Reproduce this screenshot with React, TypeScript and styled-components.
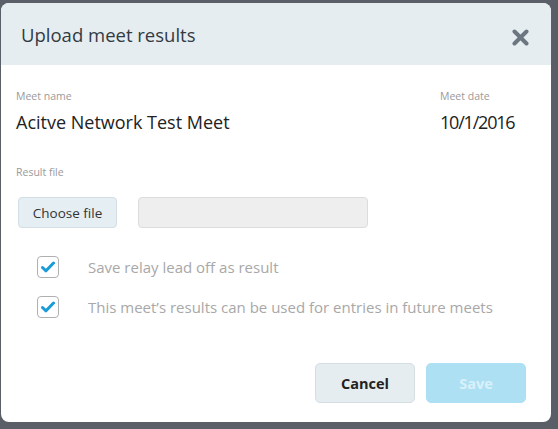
import styled, { createGlobalStyle } from "styled-components";

const GlobalStyle = createGlobalStyle`
  html, body {
    margin: 0;
    padding: 0;
    background: #5a5e66;
    font-family: "Open Sans", "Lato", sans-serif;
  }
`

const Page = styled.div`
  width: 558px;
  height: 429px;
  padding: 3px 7px 0 1px;
  box-sizing: border-box;
  overflow: hidden;
`

const Modal = styled.div`
  width: 550px;
  height: 419px;
  background: #fff;
  border-radius: 8px;
  overflow: hidden;
  display: flex;
  flex-direction: column;
`

const Header = styled.div`
  height: 62px;
  background: #e6edf0;
  display: flex;
  align-items: center;
  justify-content: space-between;
  padding: 0 22px 0 20px;
`

const Title = styled.h2`
  margin: 0;
  font-size: 18.5px;
  font-weight: 400;
  color: #333a44;
`

const Close = styled.button`
  border: none;
  background: none;
  padding: 0;
  margin-top: 6px;
  display: flex;
  cursor: pointer;
`

const Body = styled.div`
  flex: 1;
  display: flex;
  flex-direction: column;
  padding: 24px 15px 0 15px;
`

const InfoRow = styled.div`
  display: flex;
  justify-content: space-between;
`

const Field = styled.div<{ $width?: number }>`
  display: flex;
  flex-direction: column;
  width: ${p => (p.$width ? `${p.$width}px` : "auto")};
`

const Label = styled.div`
  font-size: 10.5px;
  color: #9a9a9a;
  line-height: 14px;
`

const Value = styled.div<{ $tight?: boolean }>`
  font-size: 18px;
  color: #222;
  margin-top: 8px;
  line-height: 22px;
  letter-spacing: ${p => (p.$tight ? "-1.2px" : "0")};
`

const FileSection = styled.div`
  margin-top: 32px;
`

const FileRow = styled.div`
  display: flex;
  gap: 21px;
  margin-top: 18px;
  padding-left: 2px;
`

const ChooseButton = styled.button`
  width: 99px;
  height: 31px;
  background: #e5eef2;
  border: 1px solid #d3dfe5;
  border-radius: 4px;
  font-family: inherit;
  font-size: 13.5px;
  color: #333;
  padding: 0;
`

const FileInput = styled.div`
  width: 230px;
  height: 31px;
  box-sizing: border-box;
  background: #eeeeee;
  border: 1px solid #dcdcdc;
  border-radius: 4px;
`

const Checks = styled.div`
  display: flex;
  flex-direction: column;
  gap: 18px;
  margin-top: 28px;
  padding-left: 21px;
`

const CheckRow = styled.label`
  display: flex;
  align-items: center;
  gap: 29px;
  height: 22px;
`

const Box = styled.span`
  width: 22px;
  height: 22px;
  box-sizing: border-box;
  border: 1px solid #b0b0b0;
  border-radius: 4px;
  display: flex;
  align-items: center;
  justify-content: center;
  background: #fff;
`

const CheckText = styled.span`
  font-size: 15px;
  color: #a8a8a8;
`

const Footer = styled.div`
  display: flex;
  justify-content: flex-end;
  gap: 11px;
  padding: 0 25px 19px 0;
  margin-top: auto;
`

const ActionButton = styled.button<{ $primary?: boolean }>`
  width: 100px;
  height: 40px;
  border-radius: 5px;
  font-family: inherit;
  font-size: 14.5px;
  font-weight: 700;
  padding: 0;
  border: 1px solid ${p => (p.$primary ? "#aee0f3" : "#d4dee3")};
  background: ${p => (p.$primary ? "#aee0f3" : "#e6edf0")};
  color: ${p => (p.$primary ? "#d9f1fa" : "#222")};
`

const CheckIcon = () => (
  <svg width="14" height="12" viewBox="0 0 14 12">
    <path d="M1.5 6.5 L5 9.8 L12.5 2" fill="none" stroke="#1b9ad8" strokeWidth="3" strokeLinecap="round" strokeLinejoin="round" />
  </svg>
)

const CloseIcon = () => (
  <svg width="17" height="17" viewBox="0 0 17 17">
    <path d="M2.5 2.5 L14.5 14.5 M14.5 2.5 L2.5 14.5" stroke="#6b7680" strokeWidth="4" strokeLinecap="round" />
  </svg>
)

const checks = [
  "Save relay lead off as result",
  "This meet’s results can be used for entries in future meets",
]

const App = () => {
  return (
    <Page>
      <GlobalStyle />
      <Modal>
        <Header>
          <Title>Upload meet results</Title>
          <Close aria-label="Close"><CloseIcon /></Close>
        </Header>
        <Body>
          <InfoRow>
            <Field>
              <Label>Meet name</Label>
              <Value>Acitve Network Test Meet</Value>
            </Field>
            <Field $width={96}>
              <Label>Meet date</Label>
              <Value $tight>10/1/2016</Value>
            </Field>
          </InfoRow>
          <FileSection>
            <Label>Result file</Label>
            <FileRow>
              <ChooseButton>Choose file</ChooseButton>
              <FileInput />
            </FileRow>
          </FileSection>
          <Checks>
            {checks.map(text => (
              <CheckRow key={text}>
                <Box><CheckIcon /></Box>
                <CheckText>{text}</CheckText>
              </CheckRow>
            ))}
          </Checks>
        </Body>
        <Footer>
          <ActionButton>Cancel</ActionButton>
          <ActionButton $primary>Save</ActionButton>
        </Footer>
      </Modal>
    </Page>
  )
}

export default App;
